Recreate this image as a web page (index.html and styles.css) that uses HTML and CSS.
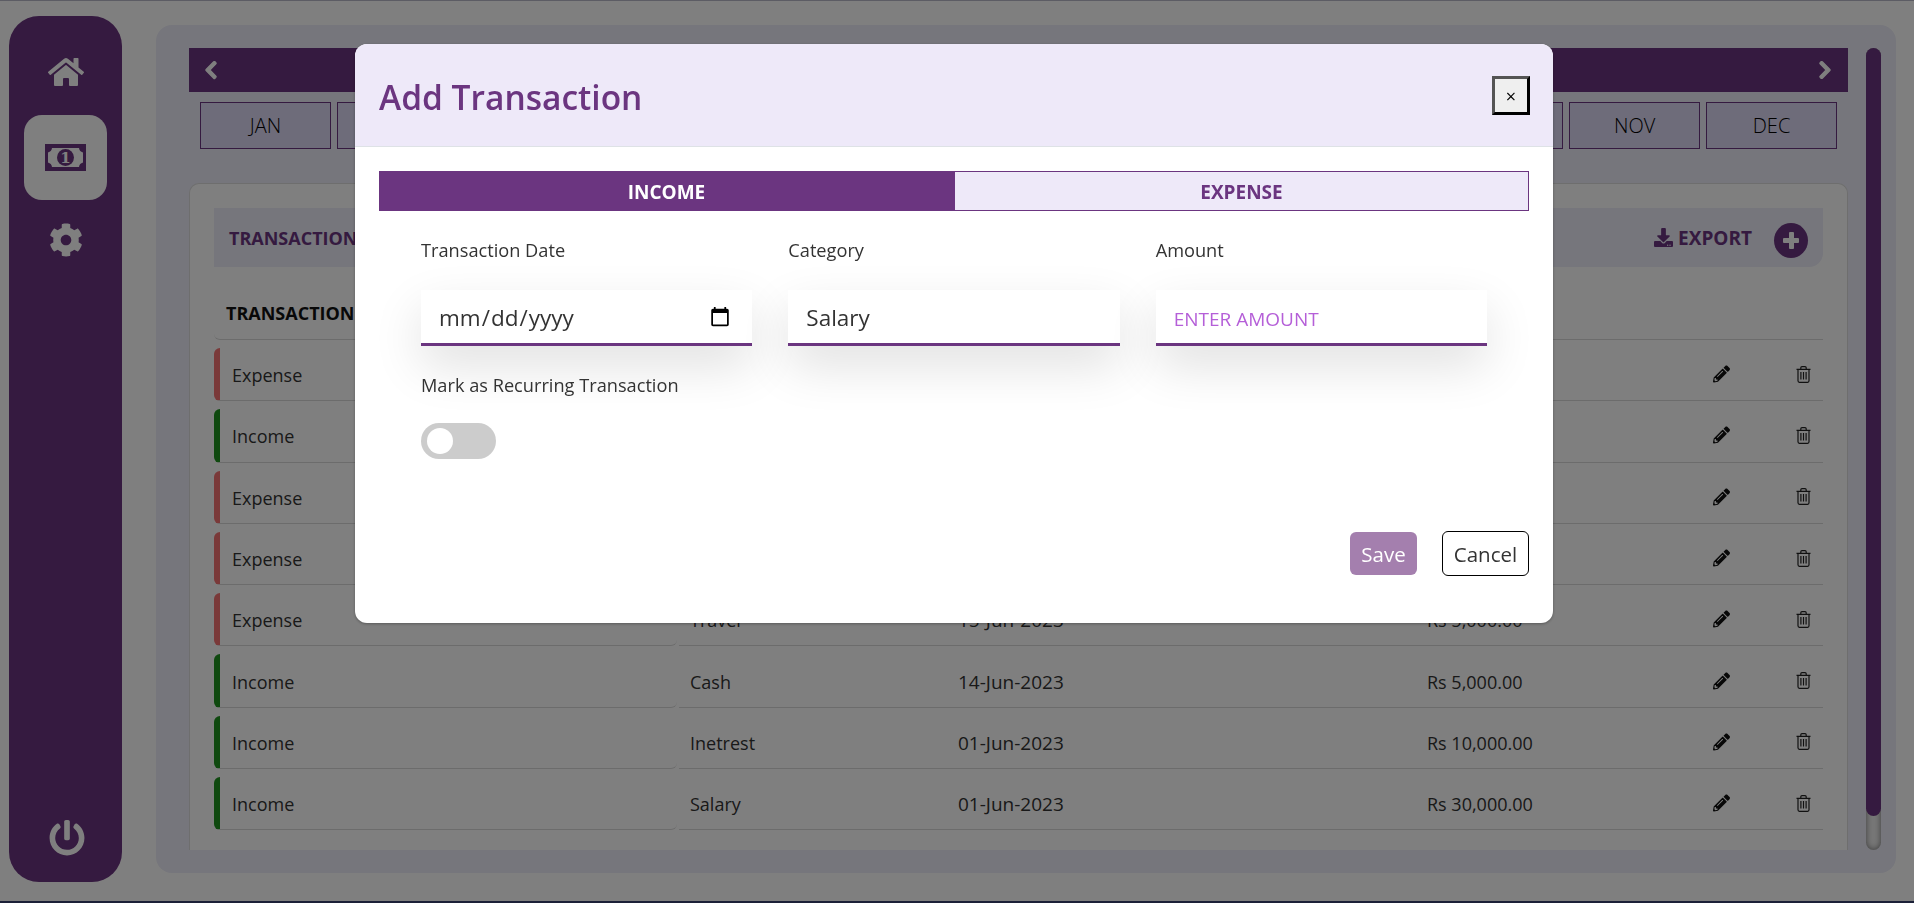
FILE: index.html
```html
<!DOCTYPE html>
<html lang="en">
<head>
  <meta charset="UTF-8">
  <title>Transactions</title>
  <link rel="stylesheet" href="styles.css">
</head>
<body>
  <svg class="sprites" width="0" height="0">
    <symbol id="i-pencil" viewBox="0 0 512 512"><path d="M497.9 142.1l-46.1 46.1c-4.7 4.7-12.3 4.7-17 0l-111-111c-4.7-4.7-4.7-12.3 0-17l46.1-46.1c18.7-18.7 49.1-18.7 67.9 0l60.1 60.1c18.8 18.7 18.8 49.1 0 67.9zM284.2 99.8L21.6 362.4.4 483.9c-2.9 16.4 11.4 30.6 27.8 27.8l121.5-21.3 262.6-262.6c4.7-4.7 4.7-12.3 0-17l-111-111c-4.8-4.7-12.4-4.7-17.1 0zM124.1 339.9c-5.5-5.5-5.5-14.3 0-19.8l154-154c5.5-5.5 14.3-5.5 19.8 0s5.5 14.3 0 19.8l-154 154c-5.5 5.5-14.3 5.5-19.8 0zM88 424h48v36.3l-64.5 11.3-31.1-31.1L51.7 376H88v48z"/></symbol>
    <symbol id="i-trash" viewBox="0 0 15 17"><path d="M.5 3.4h14M2 3.4v11.4c0 .8.6 1.5 1.4 1.5h8.2c.8 0 1.4-.7 1.4-1.5V3.4M4.8 3.4V1.8c0-.7.5-1.2 1.2-1.2h3c.7 0 1.2.5 1.2 1.2v1.6M4.9 6v7.6M7.5 6v7.6M10.1 6v7.6" fill="none" stroke="currentColor" stroke-width="1.2"/></symbol>
  </svg>

  <div class="page">
    <nav class="sidebar">
      <a class="nav-item">
        <svg class="icon-home" viewBox="0 0 576 512"><path d="M280.37 148.26L96 300.11V464a16 16 0 0 0 16 16l112.06-.29a16 16 0 0 0 15.92-16V368a16 16 0 0 1 16-16h64a16 16 0 0 1 16 16v95.64a16 16 0 0 0 16 16.05L464 480a16 16 0 0 0 16-16V300L295.67 148.26a12.19 12.19 0 0 0-15.3 0zM571.6 251.47L488 182.56V44.05a12 12 0 0 0-12-12h-56a12 12 0 0 0-12 12v72.61L318.47 43a48 48 0 0 0-61 0L4.34 251.47a12 12 0 0 0-1.6 16.9l25.5 31A12 12 0 0 0 45.15 301l235.22-193.74a12.19 12.19 0 0 1 15.3 0L530.9 301a12 12 0 0 0 16.9-1.6l25.5-31a12 12 0 0 0-1.7-16.93z"/></svg>
      </a>
      <a class="nav-item active">
        <svg class="icon-money" viewBox="0 0 41 27">
          <rect width="41" height="27" fill="#6b3580"/>
          <path d="M7 4h27c.4 2.5 1.6 3.8 4 4.500v10c-2.400.7-3.600 2-4 4.500H7c-.4-2.500-1.600-3.800-4-4.500v-10c2.400-.7 3.600-2 4-4.500z" fill="#fff"/>
          <circle cx="20.500" cy="13.500" r="8.500" fill="#6b3580"/>
          <text x="20.500" y="19" text-anchor="middle" class="money-digit">1</text>
        </svg>
      </a>
      <a class="nav-item">
        <svg class="icon-cog" viewBox="0 0 512 512"><path d="M487.4 315.7l-42.6-24.6c4.3-23.2 4.3-47 0-70.2l42.6-24.6c4.900-2.800 7.100-8.600 5.500-14-11.100-35.600-30-67.800-54.700-94.600-3.800-4.100-10-5.100-14.800-2.300L380.800 110c-17.900-15.400-38.500-27.300-60.800-35.100V25.800c0-5.600-3.900-10.500-9.400-11.700-36.700-8.200-74.300-7.800-109.200 0-5.500 1.200-9.400 6.100-9.400 11.700V75c-22.200 7.900-42.800 19.800-60.800 35.100L88.700 85.500c-4.900-2.800-11-1.900-14.800 2.300-24.700 26.700-43.600 58.900-54.700 94.600-1.700 5.400.6 11.200 5.500 14L67.300 221c-4.300 23.200-4.300 47 0 70.200l-42.600 24.600c-4.900 2.800-7.100 8.600-5.500 14 11.100 35.600 30 67.800 54.700 94.600 3.800 4.100 10 5.100 14.800 2.300l42.600-24.600c17.900 15.400 38.500 27.300 60.800 35.100v49.200c0 5.600 3.900 10.500 9.400 11.700 36.700 8.200 74.300 7.800 109.200 0 5.500-1.200 9.400-6.100 9.400-11.700v-49.200c22.200-7.900 42.800-19.800 60.800-35.100l42.600 24.600c4.900 2.800 11 1.900 14.800-2.300 24.700-26.700 43.600-58.900 54.700-94.600 1.500-5.500-.7-11.300-5.600-14.100zM256 336c-44.100 0-80-35.900-80-80s35.900-80 80-80 80 35.900 80 80-35.900 80-80 80z"/></svg>
      </a>
      <a class="nav-item logout">
        <svg class="icon-power" viewBox="0 0 512 512"><path d="M400 54.100c63 45 104 118.600 104 201.900 0 136.800-110.800 247.700-247.500 248C120 504.300 8.200 393 8 256.400 7.900 173.100 48.900 99.300 111.800 54.200c11.700-8.300 28-4.800 35 7.700L162.600 90c5.900 10.500 3.100 23.800-6.600 31-41.500 30.800-68 79.600-68 134.900-.1 92.300 74.500 168.100 168 168.100 91.600 0 168.600-74.200 168-169.100-.3-51.800-24.700-101.800-68.100-134-9.700-7.200-12.400-20.500-6.500-30.900l15.800-28.100c7-12.400 23.200-16.100 34.800-7.800zM296 264V24c0-13.300-10.700-24-24-24h-32c-13.300 0-24 10.700-24 24v240c0 13.300 10.700 24 24 24h32c13.300 0 24-10.700 24-24z"/></svg>
      </a>
    </nav>

    <main class="panel">
      <div class="content">
        <div class="year-bar">
          <svg class="chevron" viewBox="0 0 320 512"><path d="M34.520 239.030L228.870 44.690c9.370-9.370 24.570-9.370 33.940 0l22.670 22.670c9.360 9.360 9.370 24.520.04 33.900L131.490 256l154.020 154.750c9.340 9.380 9.320 24.540-.04 33.900l-22.670 22.670c-9.370 9.370-24.570 9.370-33.940 0L34.520 272.970c-9.370-9.370-9.370-24.570 0-33.940z"/></svg>
          <span>2023</span>
          <svg class="chevron" viewBox="0 0 320 512"><path d="M285.476 272.971L91.132 467.314c-9.373 9.373-24.569 9.373-33.941 0l-22.667-22.667c-9.357-9.357-9.375-24.522-.04-33.901L188.505 256 34.484 101.255c-9.335-9.379-9.317-24.544.04-33.901l22.667-22.667c9.373-9.373 24.569-9.373 33.941 0L285.475 239.030c9.373 9.372 9.373 24.568.001 33.941z"/></svg>
        </div>

        <div class="months">
          <button>JAN</button><button>FEB</button><button>MAR</button><button>APR</button>
          <button>MAY</button><button>JUN</button><button>JUL</button><button>AUG</button>
          <button>SEP</button><button>OCT</button><button>NOV</button><button>DEC</button>
        </div>

        <section class="card">
          <div class="card-head">
            <span>TRANSACTIONS</span>
            <div class="card-actions">
              <span class="export">
                <svg viewBox="0 0 512 512"><path d="M216 0h80c13.300 0 24 10.700 24 24v168h87.700c17.800 0 26.700 21.500 14.100 34.100L269.700 378.300c-7.500 7.500-19.800 7.500-27.300 0L90.100 226.100c-12.600-12.600-3.700-34.100 14.100-34.100H192V24c0-13.300 10.700-24 24-24zm296 376v112c0 13.300-10.700 24-24 24H24c-13.300 0-24-10.700-24-24V376c0-13.300 10.700-24 24-24h146.700l49 49c20.100 20.100 52.500 20.100 72.600 0l49-49H488c13.300 0 24 10.700 24 24zm-124 88c0-11-9-20-20-20s-20 9-20 20 9 20 20 20 20-9 20-20zm64 0c0-11-9-20-20-20s-20 9-20 20 9 20 20 20 20-9 20-20z"/></svg>
                EXPORT
              </span>
              <span class="add-btn"></span>
            </div>
          </div>

          <div class="row row-head">
            <div>TRANSACTION TYPE</div><div>CATEGORY</div><div>DATE</div><div>AMOUNT</div><div></div><div></div>
          </div>

          <div class="row expense"><div>Expense</div><div>Food</div><div>28-Jun-2023</div><div>Rs 1,200.00</div><div><svg class="edit"><use href="#i-pencil"/></svg></div><div><svg class="trash"><use href="#i-trash"/></svg></div></div>
          <div class="row income"><div>Income</div><div>Bonus</div><div>26-Jun-2023</div><div>Rs 8,000.00</div><div><svg class="edit"><use href="#i-pencil"/></svg></div><div><svg class="trash"><use href="#i-trash"/></svg></div></div>
          <div class="row expense"><div>Expense</div><div>Rent</div><div>20-Jun-2023</div><div>Rs 7,500.00</div><div><svg class="edit"><use href="#i-pencil"/></svg></div><div><svg class="trash"><use href="#i-trash"/></svg></div></div>
          <div class="row expense"><div>Expense</div><div>Shopping</div><div>18-Jun-2023</div><div>Rs 2,000.00</div><div><svg class="edit"><use href="#i-pencil"/></svg></div><div><svg class="trash"><use href="#i-trash"/></svg></div></div>
          <div class="row expense"><div>Expense</div><div>Travel</div><div>15-Jun-2023</div><div>Rs 5,000.00</div><div><svg class="edit"><use href="#i-pencil"/></svg></div><div><svg class="trash"><use href="#i-trash"/></svg></div></div>
          <div class="row income"><div>Income</div><div>Cash</div><div>14-Jun-2023</div><div>Rs 5,000.00</div><div><svg class="edit"><use href="#i-pencil"/></svg></div><div><svg class="trash"><use href="#i-trash"/></svg></div></div>
          <div class="row income"><div>Income</div><div>Inetrest</div><div>01-Jun-2023</div><div>Rs 10,000.00</div><div><svg class="edit"><use href="#i-pencil"/></svg></div><div><svg class="trash"><use href="#i-trash"/></svg></div></div>
          <div class="row income"><div>Income</div><div>Salary</div><div>01-Jun-2023</div><div>Rs 30,000.00</div><div><svg class="edit"><use href="#i-pencil"/></svg></div><div><svg class="trash"><use href="#i-trash"/></svg></div></div>
        </section>
      </div>

      <div class="scrollbar"><div class="scroll-thumb"></div></div>
    </main>
  </div>

  <div class="backdrop"></div>

  <div class="modal">
    <header class="modal-head">
      <h2>Add Transaction</h2>
      <button class="close">×</button>
    </header>

    <div class="modal-body">
      <div class="tabs">
        <button class="tab selected">INCOME</button>
        <button class="tab">EXPENSE</button>
      </div>

      <div class="fields">
        <div class="field">
          <label>Transaction Date</label>
          <input type="date">
        </div>
        <div class="field">
          <label>Category</label>
          <input type="text" value="Salary">
        </div>
        <div class="field">
          <label>Amount</label>
          <input type="text" class="amount" placeholder="ENTER AMOUNT">
        </div>
      </div>

      <div class="recurring">
        <label>Mark as Recurring Transaction</label>
        <span class="toggle"></span>
      </div>
    </div>

    <footer class="modal-foot">
      <button class="btn-save">Save</button>
      <button class="btn-cancel">Cancel</button>
    </footer>
  </div>
</body>
</html>
```

FILE: styles.css
```css
* {
  box-sizing: border-box;
}
html, body {
  height: 100%;
}
body {
  margin: 0;
  overflow: hidden;
  background: #fff;
  color: #333;
  font-family: "Open Sans", "Noto Sans", sans-serif;
  font-size: 18px;
}
button {
  font-family: inherit;
}
.sprites {
  position: absolute;
}

.page {
  display: flex;
  height: 903px;
  padding: 16px 18px 21px 9px;
  gap: 34px;
}

/* sidebar */
.sidebar {
  width: 113px;
  flex: none;
  display: flex;
  flex-direction: column;
  align-items: center;
  background: #6b3580;
  border-radius: 30px;
  padding-top: 40px;
}
.nav-item {
  display: flex;
  align-items: center;
  justify-content: center;
  color: #fff;
  fill: #fff;
}
.nav-item.active {
  width: 83px;
  height: 85px;
  margin-top: 27px;
  background: #fff;
  border-radius: 18px;
}
.icon-home {
  width: 36px;
  height: 32px;
}
.icon-money {
  width: 41px;
  height: 27px;
}
.money-digit {
  fill: #fff;
  font-family: "DejaVu Serif", serif;
  font-size: 15px;
  font-weight: bold;
}
.icon-cog {
  width: 34px;
  height: 34px;
  margin-top: 23px;
}
.logout {
  margin-top: auto;
  margin-bottom: 26px;
  margin-left: 3px;
}
.icon-power {
  width: 36px;
  height: 36px;
}

/* main panel */
.panel {
  flex: 1;
  display: flex;
  gap: 18px;
  height: 848px;
  margin-top: 9px;
  padding: 23px 15px 23px 33px;
  background: #ececf8;
  border-radius: 16px;
}
.content {
  flex: 1;
  display: flex;
  flex-direction: column;
  min-width: 0;
}
.year-bar {
  display: flex;
  align-items: center;
  justify-content: space-between;
  height: 44px;
  padding: 0 16px 0 15px;
  background: #6b3580;
  color: #fff;
  fill: #fff;
  font-weight: 600;
}
.chevron {
  width: 14px;
  height: 20px;
  stroke: #fff;
  stroke-width: 30px;
}
.months {
  display: grid;
  grid-template-columns: repeat(12, 1fr);
  gap: 6px;
  height: 47px;
  margin: 10px 11px 0;
}
.months button {
  background: #dcd8f4;
  border: 1px solid #6b3580;
  color: #000;
  font-size: 20px;
  font-weight: 300;
}

.card {
  flex: 1;
  margin-top: 34px;
  padding: 24px 24px 0 24px;
  background: #fff;
  border: 1px solid #dcdcdc;
  border-bottom: none;
  border-radius: 10px 10px 0 0;
  overflow: hidden;
}
.card-head {
  display: flex;
  align-items: center;
  justify-content: space-between;
  height: 59px;
  padding: 0 15px;
  background: #ececf8;
  border-radius: 0 0 14px 0;
  color: #6b3580;
  font-weight: 700;
}
.card-actions {
  display: flex;
  align-items: center;
  gap: 22px;
}
.export {
  display: flex;
  align-items: center;
  gap: 5px;
  fill: #6b3580;
  font-size: 19px;
}
.export svg {
  width: 19px;
  height: 19px;
}
.add-btn {
  position: relative;
  width: 34px;
  height: 35px;
  margin-top: 5px;
  border-radius: 50%;
  background: #6b3580;
}
.add-btn::before,
.add-btn::after {
  content: "";
  position: absolute;
  background: #fff;
  border-radius: 1px;
}
.add-btn::before {
  left: 9px;
  right: 9px;
  top: 15px;
  height: 5px;
}
.add-btn::after {
  top: 9px;
  bottom: 9px;
  left: 15px;
  width: 5px;
}

/* table rows */
.row {
  display: grid;
  grid-template-columns: 463px 267px 470px 266px 83px 60px;
  height: 53.300px;
  margin-bottom: 8px;
}
.row > div {
  display: flex;
  align-items: center;
  border-bottom: 1px solid #d8d8d8;
  padding: 2px 0 0 14px;
}
.row > div:nth-child(1) {
  border-radius: 6px 0 6px 6px;
  border-left: 6px solid transparent;
  padding-left: 12px;
}
.row > div:nth-child(2) {
  margin-left: 2px;
  padding-left: 11px;
}
.row > div:nth-child(3) {
  font-size: 19px;
}
.row > div:nth-child(4) {
  padding-left: 13px;
}
.row > div:nth-child(5),
.row > div:nth-child(6) {
  padding: 0;
}
.row > div:nth-child(5) {
  justify-content: center;
}
.row > div:nth-child(6) {
  padding-left: 33px;
}
.row-head {
  height: 73px;
  color: #111;
  font-weight: 700;
}
.row-head > div {
  align-items: flex-start;
  padding-top: 34px;
}
.row-head > div:nth-child(1) {
  border-left: none;
  padding-left: 12px;
}
.row-head > div:nth-child(3) {
  font-size: 18px;
}
.expense > div:nth-child(1) {
  border-left-color: #f47272;
}
.income > div:nth-child(1) {
  border-left-color: #1f921f;
}
.edit {
  width: 17px;
  height: 18px;
  fill: #111;
}
.trash {
  width: 15px;
  height: 17px;
  color: #222;
}

.scrollbar {
  width: 15px;
  flex: none;
  height: 802px;
  background: #eee;
  border-radius: 8px;
  box-shadow: inset 0 0 6px #777;
}
.scroll-thumb {
  height: 768px;
  background: #6b3580;
  border-radius: 8px;
}

/* modal */
.backdrop {
  position: fixed;
  inset: 0;
  background: rgba(0, 0, 0, 0.5);
  border-top: 1px solid rgba(40, 40, 60, 0.4);
  border-bottom: 2px solid #1b2038;
}
.modal {
  position: fixed;
  left: 355px;
  top: 44px;
  width: 1198px;
  height: 579px;
  display: flex;
  flex-direction: column;
  background: #fff;
  border-radius: 12px;
  box-shadow: 0 1px 3px rgba(0, 0, 0, 0.3);
}
.modal-head {
  display: flex;
  align-items: center;
  justify-content: space-between;
  height: 103px;
  padding: 0 23px 0 24px;
  background: #eee9f9;
  border-bottom: 1px solid #dee2e6;
  border-radius: 12px 12px 0 0;
}
.modal-head h2 {
  margin: 3px 0 0;
  color: #6b3580;
  font-size: 33.500px;
  font-weight: 600;
}
.close {
  width: 38px;
  height: 39px;
  padding: 1px 0 0;
  background: #efefef;
  border: 3px outset #000;
  color: #000;
  font-size: 18px;
}
.modal-body {
  padding: 24px 24px 0 24px;
}
.tabs {
  display: flex;
  height: 40px;
}
.tab {
  flex: 1;
  padding-top: 2px;
  background: #eee9f9;
  border: 1px solid #6b3580;
  color: #6b3580;
  font-size: 19px;
  font-weight: 700;
}
.tab.selected {
  background: #6b3580;
  color: #fff;
}
.fields {
  display: grid;
  grid-template-columns: repeat(3, 1fr);
  gap: 36px;
  margin: 27px 42px 0 42px;
}
.field label,
.recurring label {
  display: block;
  height: 25px;
  line-height: 25px;
  font-size: 18.200px;
}
.field input {
  display: block;
  width: 100%;
  height: 56px;
  margin-top: 27px;
  padding: 2px 18px 0;
  background: #fff;
  border: none;
  border-bottom: 3px solid #6b3580;
  box-shadow: 0 20px 50px rgba(0, 0, 0, 0.12);
  color: #333;
  font-family: inherit;
  font-size: 22.500px;
  outline: none;
}
.field input[type="date"] {
  padding-left: 17px;
  padding-right: 19px;
}
.field input.amount {
  padding-top: 4px;
  font-size: 19px;
}
.amount::placeholder {
  color: #b55fd8;
  opacity: 1;
}
.recurring {
  margin: 27px 0 0 42px;
}
.toggle {
  display: block;
  position: relative;
  width: 75px;
  height: 36px;
  margin-top: 25px;
  background: #ccc;
  border-radius: 18px;
}
.toggle::before {
  content: "";
  position: absolute;
  left: 6px;
  top: 5px;
  width: 26px;
  height: 26px;
  background: #fff;
  border-radius: 50%;
}
.modal-foot {
  display: flex;
  align-items: center;
  justify-content: flex-end;
  gap: 25px;
  margin-top: auto;
  padding: 0 24px 47px;
}
.btn-save,
.btn-cancel {
  font-size: 20.500px;
  border-radius: 6px;
}
.btn-save {
  width: 67px;
  height: 43px;
  padding: 0;
  background: #a47fae;
  border: none;
  color: #fff;
}
.btn-cancel {
  width: 87px;
  height: 45px;
  padding: 0;
  background: #fff;
  border: 1px solid #000;
  color: #333;
}
```
